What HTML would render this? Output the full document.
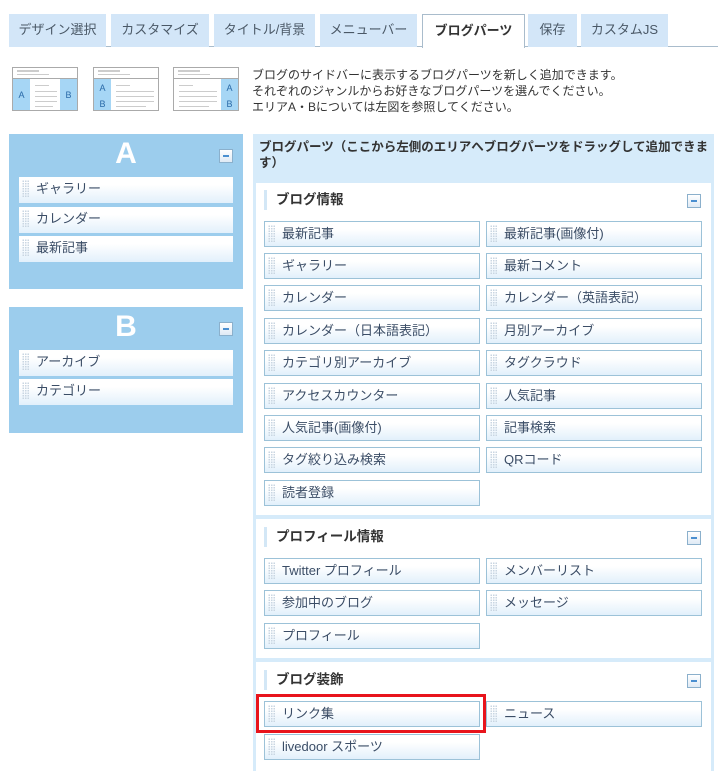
<!DOCTYPE html>
<html><head><meta charset="utf-8"><style>
*{box-sizing:border-box;margin:0;padding:0}
body{width:718px;height:771px;background:#fff;position:relative;overflow:hidden;font-family:"Liberation Sans","Noto Sans CJK JP",sans-serif;font-size:13px;color:#3a4a5c}
.a{position:absolute}
.tab{position:absolute;top:14px;height:33px;background:#d3e6f8;color:#4a5866;font-size:13px;text-align:center;line-height:31px}
.tab.on{background:#fff;border:1px solid #a9bccc;border-bottom:none;height:34px;font-weight:bold;color:#333}
.ic{position:absolute;top:67px;width:66px;height:44px;border:1px solid #aaa;background:#fff}
.ic .h{position:absolute;left:0;right:0;top:0;height:11px;border-bottom:1px solid #aaa}
.ic .h:before{content:"";position:absolute;left:4px;top:2px;width:22px;height:2px;background:#ccc}
.ic .h:after{content:"";position:absolute;left:4px;top:6px;width:32px;height:1px;background:#ccc}
.col{position:absolute;top:11px;bottom:0;width:17px;background:#a6d6f5;color:#2a6aa8;font-size:9px;text-align:center}
.ln{position:absolute;height:1px;background:#ccc}
.panel{position:absolute;left:9px;width:234px;background:#9ccded}
.big{position:absolute;left:0;right:0;text-align:center;color:#fff;font-weight:bold;font-size:30px;top:3px}
.min{position:absolute;width:14px;height:14px;border:1px solid #8bb0cc;background:linear-gradient(#fff,#dfeaf5)}
.min:after{content:"";position:absolute;left:3px;top:5px;width:6px;height:2px;background:#4b8fd0}
.it{position:absolute;height:26px;background:linear-gradient(#fff 30%,#e2f0fb);padding-left:17px;line-height:24px;color:#3b4d66;font-size:13px}
.it:before{content:"";position:absolute;left:3px;top:3px;width:7px;height:18px;background-image:radial-gradient(#c9d6e2 45%,transparent 50%);background-size:2.5px 2.5px}
.b{border:1px solid #9cc2d8;width:216px}
.sec{position:absolute;left:256px;width:455px;background:#fff}
.st{position:absolute;left:8px;font-weight:bold;font-size:13.5px;color:#333;border-left:3px solid #d3e7f6;padding-left:9px;height:20px;line-height:20px}
</style></head><body>
<div class="a" style="left:9px;top:46px;width:709px;height:1px;background:#a9bccc"></div>
<div class="tab" style="left:9px;width:97px">デザイン選択</div>
<div class="tab" style="left:111px;width:98px">カスタマイズ</div>
<div class="tab" style="left:214px;width:101px">タイトル/背景</div>
<div class="tab" style="left:320px;width:97px">メニューバー</div>
<div class="tab on" style="left:422px;width:103px">ブログパーツ</div>
<div class="tab" style="left:528px;width:49px">保存</div>
<div class="tab" style="left:581px;width:87px">カスタムJS</div>

<div class="ic" style="left:12px"><div class="h"></div><div class="col" style="left:0;line-height:32px">A</div><div class="col" style="right:0;line-height:32px">B</div>
<div class="ln" style="left:22px;top:17px;width:14px"></div><div class="ln" style="left:22px;top:23px;width:22px"></div><div class="ln" style="left:22px;top:28px;width:22px"></div><div class="ln" style="left:22px;top:33px;width:22px"></div><div class="ln" style="left:22px;top:38px;width:18px"></div></div>
<div class="ic" style="left:93px"><div class="h"></div><div class="col" style="left:0;line-height:16px;padding-top:1px">A<br>B</div>
<div class="ln" style="left:22px;top:17px;width:14px"></div><div class="ln" style="left:22px;top:23px;width:38px"></div><div class="ln" style="left:22px;top:28px;width:38px"></div><div class="ln" style="left:22px;top:33px;width:38px"></div><div class="ln" style="left:22px;top:38px;width:30px"></div></div>
<div class="ic" style="left:173px"><div class="h"></div><div class="col" style="right:0;line-height:16px;padding-top:1px">A<br>B</div>
<div class="ln" style="left:5px;top:17px;width:14px"></div><div class="ln" style="left:5px;top:23px;width:38px"></div><div class="ln" style="left:5px;top:28px;width:38px"></div><div class="ln" style="left:5px;top:33px;width:38px"></div><div class="ln" style="left:5px;top:38px;width:30px"></div></div>
<div class="a" style="left:252px;top:67px;font-size:12px;line-height:16px;color:#333">ブログのサイドバーに表示するブログパーツを新しく追加できます。<br>それぞれのジャンルからお好きなブログパーツを選んでください。<br>エリアA・Bについては左図を参照してください。</div>

<div class="panel" style="top:134px;height:155px"><div class="big">A</div><div class="min" style="left:210px;top:15px"></div>
<div class="it" style="left:10px;top:43px;width:214px">ギャラリー</div>
<div class="it" style="left:10px;top:73px;width:214px">カレンダー</div>
<div class="it" style="left:10px;top:102px;width:214px">最新記事</div></div>
<div class="panel" style="top:307px;height:126px"><div class="big">B</div><div class="min" style="left:210px;top:15px"></div>
<div class="it" style="left:10px;top:43px;width:214px">アーカイブ</div>
<div class="it" style="left:10px;top:72px;width:214px">カテゴリー</div></div>

<div class="a" style="left:253px;top:134px;width:461px;height:637px;background:#d6ebfa"></div>
<div class="a" style="left:259px;top:139px;white-space:nowrap;font-weight:bold;font-size:12.5px;line-height:16px;color:#333">ブログパーツ（ここから左側のエリアへブログパーツをドラッグして追加できま<br>す）</div>

<div class="sec" style="top:183px;height:332px"><div class="st" style="top:7px">ブログ情報</div><div class="min" style="left:431px;top:11px"></div></div>
<div class="sec" style="top:519px;height:139px"><div class="st" style="top:8px">プロフィール情報</div><div class="min" style="left:431px;top:12px"></div></div>
<div class="sec" style="top:662px;height:109px"><div class="st" style="top:8px">ブログ装飾</div><div class="min" style="left:431px;top:12px"></div></div>

<div class="it b" style="left:264px;top:221px">最新記事</div><div class="it b" style="left:486px;top:221px">最新記事(画像付)</div>
<div class="it b" style="left:264px;top:253px">ギャラリー</div><div class="it b" style="left:486px;top:253px">最新コメント</div>
<div class="it b" style="left:264px;top:285px">カレンダー</div><div class="it b" style="left:486px;top:285px">カレンダー（英語表記）</div>
<div class="it b" style="left:264px;top:318px">カレンダー（日本語表記）</div><div class="it b" style="left:486px;top:318px">月別アーカイブ</div>
<div class="it b" style="left:264px;top:350px">カテゴリ別アーカイブ</div><div class="it b" style="left:486px;top:350px">タグクラウド</div>
<div class="it b" style="left:264px;top:383px">アクセスカウンター</div><div class="it b" style="left:486px;top:383px">人気記事</div>
<div class="it b" style="left:264px;top:415px">人気記事(画像付)</div><div class="it b" style="left:486px;top:415px">記事検索</div>
<div class="it b" style="left:264px;top:447px">タグ絞り込み検索</div><div class="it b" style="left:486px;top:447px">QRコード</div>
<div class="it b" style="left:264px;top:480px">読者登録</div>
<div class="it b" style="left:264px;top:558px">Twitter プロフィール</div><div class="it b" style="left:486px;top:558px">メンバーリスト</div>
<div class="it b" style="left:264px;top:590px">参加中のブログ</div><div class="it b" style="left:486px;top:590px">メッセージ</div>
<div class="it b" style="left:264px;top:623px">プロフィール</div>
<div class="it b" style="left:264px;top:701px">リンク集</div><div class="it b" style="left:486px;top:701px">ニュース</div>
<div class="it b" style="left:264px;top:734px">livedoor スポーツ</div>
<div class="a" style="left:256px;top:694px;width:230px;height:39px;border:3px solid #e8141c"></div>
</body></html>
